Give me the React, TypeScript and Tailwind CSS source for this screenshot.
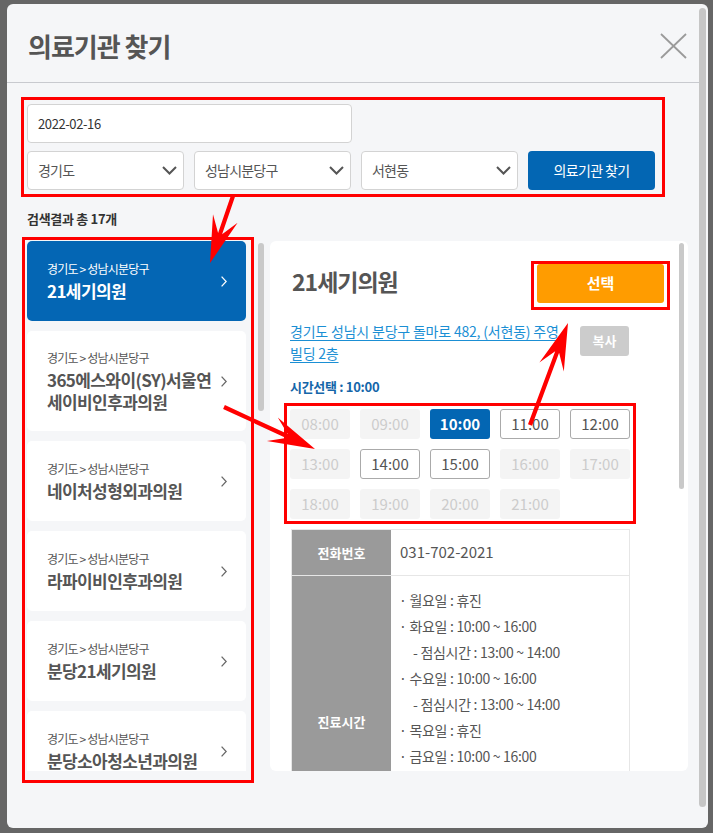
import React from "react";

type Slot = { t: string; s: "off" | "on" | "sel" };

const slots: Slot[] = [
  { t: "08:00", s: "off" },
  { t: "09:00", s: "off" },
  { t: "10:00", s: "sel" },
  { t: "11:00", s: "on" },
  { t: "12:00", s: "on" },
  { t: "13:00", s: "off" },
  { t: "14:00", s: "on" },
  { t: "15:00", s: "on" },
  { t: "16:00", s: "off" },
  { t: "17:00", s: "off" },
  { t: "18:00", s: "off" },
  { t: "19:00", s: "off" },
  { t: "20:00", s: "off" },
  { t: "21:00", s: "off" },
];

const clinics: { name: string[]; active?: boolean }[] = [
  { name: ["21세기의원"], active: true },
  { name: ["365에스와이(SY)서울연", "세이비인후과의원"] },
  { name: ["네이처성형외과의원"] },
  { name: ["라파이비인후과의원"] },
  { name: ["분당21세기의원"] },
  { name: ["분당소아청소년과의원"] },
];

const hours: { text: string; sub?: boolean }[] = [
  { text: "· 월요일 : 휴진" },
  { text: "· 화요일 : 10:00 ~ 16:00" },
  { text: "- 점심시간 : 13:00 ~ 14:00", sub: true },
  { text: "· 수요일 : 10:00 ~ 16:00" },
  { text: "- 점심시간 : 13:00 ~ 14:00", sub: true },
  { text: "· 목요일 : 휴진" },
  { text: "· 금요일 : 10:00 ~ 16:00" },
  { text: "- 점심시간 : 13:00 ~ 14:00", sub: true },
  { text: "· 토요일 : 10:00 ~ 13:00" },
  { text: "· 일요일 : 휴진" },
];

function SelectChevron() {
  return (
    <svg width="15" height="9" viewBox="0 0 15 9" fill="none">
      <polyline points="1,1 7.5,7.5 14,1" stroke="#555" strokeWidth="2" />
    </svg>
  );
}

function CardChevron({ color }: { color: string }) {
  return (
    <svg width="6" height="11" viewBox="0 0 6 11" fill="none">
      <polyline points="0.6,0.6 5.2,5.5 0.6,10.4" stroke={color} strokeWidth="1.3" />
    </svg>
  );
}

function Select({ label }: { label: string }) {
  return (
    <div className="w-[157px] h-[39px] bg-white border border-[#d3d3d3] rounded-[4px] flex items-center justify-between pl-[10px] pr-[6px]">
      <span className="text-[14px] text-[#555] tracking-[-0.8px]">{label}</span>
      <SelectChevron />
    </div>
  );
}

// red annotation arrow: shaft from (x1,y1) to a notched head ending at (x2,y2)
function arrowPoints(x1: number, y1: number, x2: number, y2: number) {
  const L = 47;
  const W = 13;
  const notch = 0.66;
  const s = 2.1;
  const dx = x2 - x1;
  const dy = y2 - y1;
  const len = Math.hypot(dx, dy);
  const ux = dx / len;
  const uy = dy / len;
  const nx = -uy;
  const ny = ux;
  const p = (x: number, y: number) => `${x.toFixed(1)},${y.toFixed(1)}`;
  const bx = x2 - ux * L;
  const by = y2 - uy * L;
  const kx = x2 - ux * L * notch;
  const ky = y2 - uy * L * notch;
  return [
    p(x1 + nx * s, y1 + ny * s),
    p(kx + nx * s, ky + ny * s),
    p(bx + nx * W, by + ny * W),
    p(x2, y2),
    p(bx - nx * W, by - ny * W),
    p(kx - nx * s, ky - ny * s),
    p(x1 - nx * s, y1 - ny * s),
  ].join(" ");
}

function Annotations() {
  return (
    <svg
      className="absolute left-0 top-0 pointer-events-none"
      width="713"
      height="833"
      viewBox="0 0 713 833"
    >
      <g fill="none" stroke="#ff0000" strokeWidth="3">
        <rect x="22.5" y="98.5" width="641" height="97" />
        <rect x="23.5" y="238.5" width="229" height="543" />
        <rect x="285.5" y="404.5" width="349" height="118" />
        <rect x="532.5" y="262.5" width="136" height="46" />
      </g>
      <g fill="#ff0000">
        <polygon points={arrowPoints(233, 196, 210, 263)} />
        <polygon points={arrowPoints(224, 407, 315, 449)} />
        <polygon points={arrowPoints(530, 425, 568, 323)} />
      </g>
    </svg>
  );
}

export default function App() {
  return (
    <div className="relative w-[713px] h-[833px] overflow-hidden bg-[#666666] pt-[4px] pl-[7px] font-['Noto_Sans_CJK_KR','Noto_Sans',sans-serif]">
      <div className="w-[701px] h-[824px] bg-[#f5f6f8] rounded-[6px] overflow-hidden flex">
        <div className="flex-1 min-w-0">
          {/* header */}
          <div className="h-[79px] border-b border-[#c8cacf] flex items-center justify-between pl-[21px] pr-[12px] pt-[5px]">
            <h1 className="text-[26px] leading-none font-bold text-[#555] tracking-[-1px]">의료기관 찾기</h1>
            <svg width="27" height="26" viewBox="0 0 27 26" fill="none">
              <line x1="1" y1="1" x2="26" y2="25" stroke="#9a9a9a" strokeWidth="1.8" />
              <line x1="26" y1="1" x2="1" y2="25" stroke="#9a9a9a" strokeWidth="1.8" />
            </svg>
          </div>

          {/* body */}
          <div className="pl-[20px] pt-[21px]">
            <div className="w-[325px] h-[39px] bg-white border border-[#d3d3d3] rounded-[4px] flex items-center px-[10px]">
              <span className="text-[13px] text-[#333] tracking-[-0.4px]">2022-02-16</span>
            </div>
            <div className="mt-[8px] flex gap-[10px]">
              <Select label="경기도" />
              <Select label="성남시분당구" />
              <Select label="서현동" />
              <button className="w-[127px] h-[39px] bg-[#0366b3] rounded-[4px] text-white text-[14px] tracking-[-0.6px] flex items-center justify-center">
                의료기관 찾기
              </button>
            </div>

            <div className="mt-[19px] h-[20px] flex items-center text-[13px] font-bold text-[#333] tracking-[-0.3px]">
              검색결과 총 17개
            </div>

            <div className="mt-[12px] h-[530px] flex items-start">
              {/* clinic list */}
              <div className="w-[219px] h-full overflow-hidden flex flex-col gap-[10px]">
                {clinics.map((c, i) => (
                  <div
                    key={i}
                    className={
                      "shrink-0 rounded-[5px] flex items-center justify-between pl-[20px] pr-[19px] " +
                      (c.name.length > 1 ? "h-[100px] " : "h-[80px] ") +
                      (c.active ? "bg-[#0466b4]" : "bg-white")
                    }
                  >
                    <div className="flex flex-col gap-[3px]">
                      <div
                        className={
                          "text-[12px] leading-[16px] tracking-[-0.8px] " +
                          (c.active ? "text-white" : "text-[#555]")
                        }
                      >
                        경기도 &gt; 성남시분당구
                      </div>
                      <div
                        className={
                          "text-[17px] leading-[22px] font-bold tracking-[-0.6px] whitespace-nowrap " +
                          (c.active ? "text-white" : "text-[#555]")
                        }
                      >
                        {c.name.map((line, j) => (
                          <div key={j}>{line}</div>
                        ))}
                      </div>
                    </div>
                    <CardChevron color={c.active ? "#ffffff" : "#666666"} />
                  </div>
                ))}
              </div>

              {/* list scrollbar */}
              <div className="ml-[12px] mt-[2px] w-[6px] h-[168px] rounded-full bg-[#c9c9c9]" />

              {/* detail panel */}
              <div className="ml-[6px] w-[418px] h-full bg-white rounded-[6px] overflow-hidden flex">
                <div className="flex-1 min-w-0 pl-[20px] pr-[15px] pt-[23px]">
                  <div className="h-[39px] flex items-center justify-between">
                    <h2 className="ml-[2px] -mt-[5px] text-[23px] leading-none font-bold text-[#555] tracking-[-1px]">
                      21세기의원
                    </h2>
                    <button className="w-[127px] h-[39px] rounded-[3px] bg-[#ff9c00] text-white text-[15px] font-bold flex items-center justify-center">
                      선택
                    </button>
                  </div>

                  <div className="mt-[17px] flex items-start">
                    <a className="w-[275px] text-[14px] leading-[22px] text-[#1b8fd4] underline underline-offset-[3px] tracking-[-0.2px]">
                      경기도 성남시 분당구 돌마로 482, (서현동) 주영 빌딩 2층
                    </a>
                    <button className="ml-[15px] mt-[6px] w-[49px] h-[30px] rounded-[3px] bg-[#cccccc] text-white text-[13px] font-bold flex items-center justify-center">
                      복사
                    </button>
                  </div>

                  <div className="mt-[13px] h-[20px] flex items-center text-[13px] font-bold text-[#1566a9] tracking-[-0.3px]">
                    시간선택 : 10:00
                  </div>

                  <div className="mt-[12px] w-[340px] grid grid-cols-5 gap-[10px]">
                    {slots.map((s) => (
                      <div
                        key={s.t}
                        className={
                          "h-[30px] rounded-[3px] flex items-center justify-center text-[15px] " +
                          (s.s === "sel"
                            ? "bg-[#0366b3] text-white font-bold"
                            : s.s === "on"
                            ? "bg-white border border-[#aaaaaa] text-[#555]"
                            : "bg-[#f4f4f4] text-[#cccccc]")
                        }
                      >
                        {s.t}
                      </div>
                    ))}
                  </div>

                  {/* info table */}
                  <div className="mt-[10px] ml-[1px] w-[339px] border border-[#e6e6e6]">
                    <div className="flex h-[46px] border-b border-[#e6e6e6]">
                      <div className="w-[99px] bg-[#9a9a9a] flex items-center justify-center text-white text-[13px] font-bold">
                        전화번호
                      </div>
                      <div className="flex-1 flex items-center pl-[9px] text-[15px] text-[#555]">
                        031-702-2021
                      </div>
                    </div>
                    <div className="flex">
                      <div className="w-[99px] bg-[#9a9a9a] flex items-center justify-center text-white text-[13px] font-bold">
                        진료시간
                      </div>
                      <div className="flex-1 pl-[8px] pt-[11px] pb-[20px] text-[14px] leading-[26px] text-[#555] tracking-[-0.3px]">
                        {hours.map((h, i) => (
                          <div key={i} className={h.sub ? "pl-[14px]" : ""}>
                            {h.text}
                          </div>
                        ))}
                      </div>
                    </div>
                  </div>
                </div>
                <div className="w-[9px] shrink-0 pt-[2px]">
                  <div className="w-[5px] h-[246px] rounded-full bg-[#c9c9c9]" />
                </div>
              </div>
            </div>
          </div>
        </div>

        {/* dialog scrollbar */}
        <div className="w-[9px] shrink-0 pt-[4px]">
          <div className="w-[7px] h-[799px] rounded-full bg-[#c6c6c6]" />
        </div>
      </div>

      <Annotations />
    </div>
  );
}
